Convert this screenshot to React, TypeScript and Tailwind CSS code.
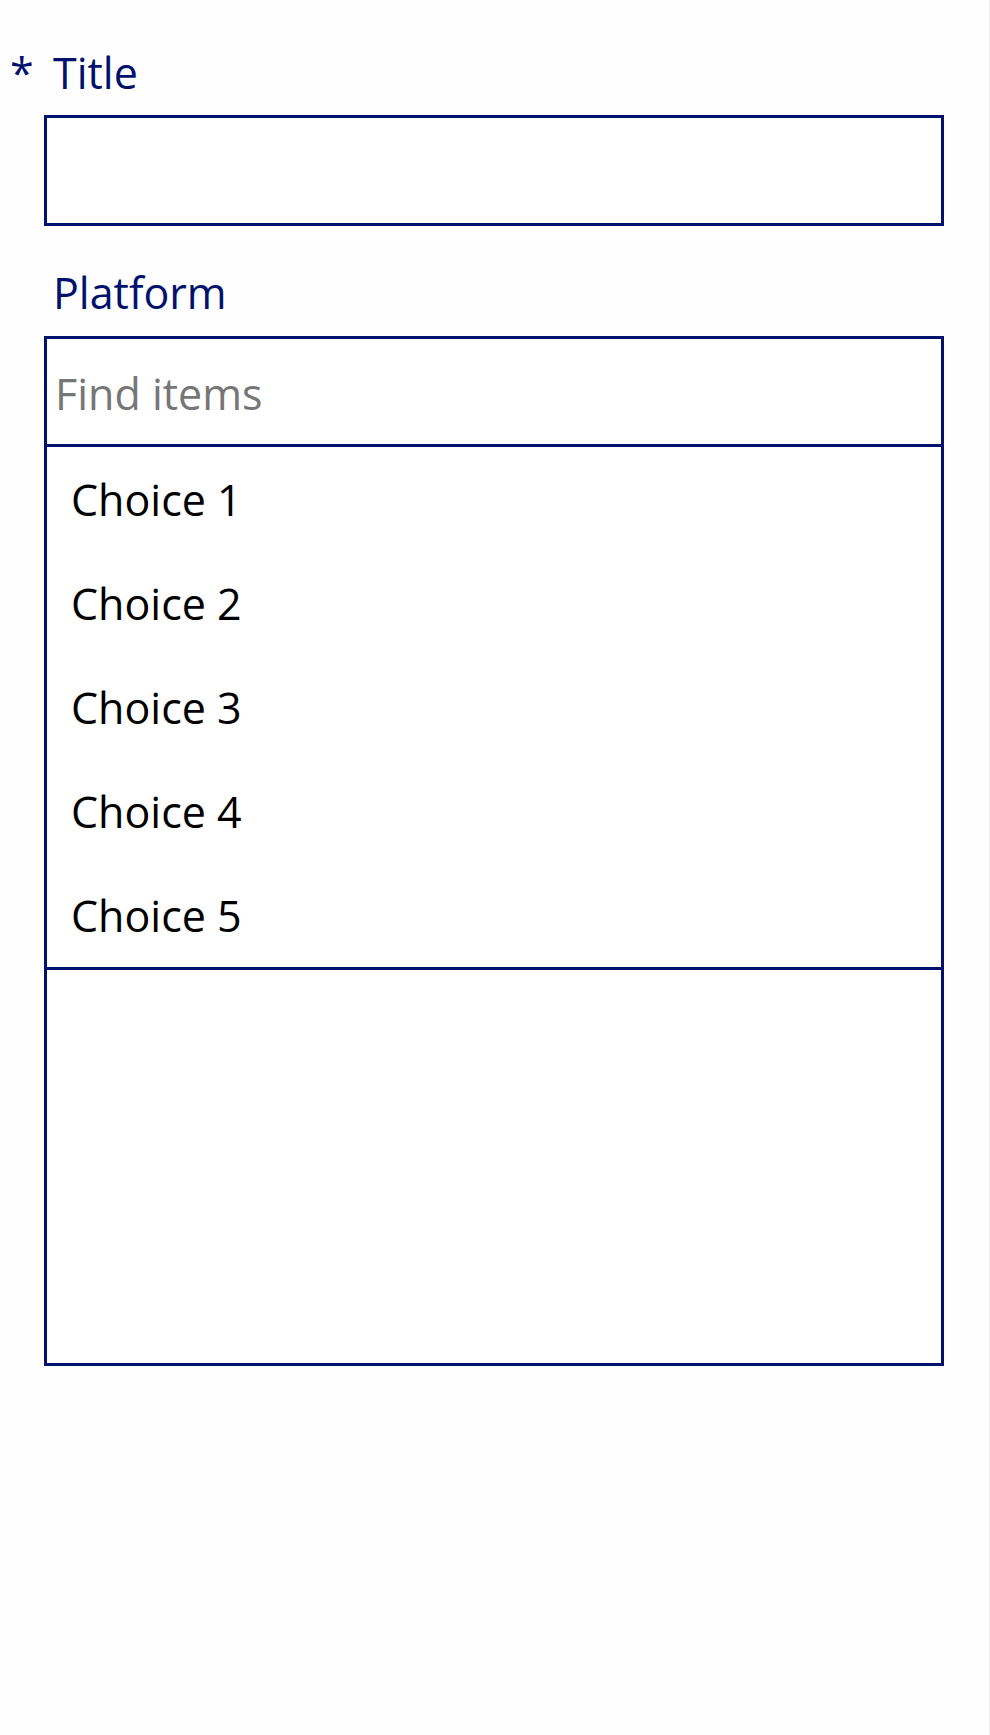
import React from "react";

const choices = ["Choice 1", "Choice 2", "Choice 3", "Choice 4", "Choice 5"];

export default function App() {
  return (
    <div
      className="w-[990px] h-[1735px] bg-[#fefefe] border-r border-[#ececec] text-[43px] leading-[58px]"
      style={{ fontFamily: "'Open Sans', 'Noto Sans', sans-serif" }}
    >
      <div className="pt-[44px]">
        <div className="flex items-start text-[#00126b]">
          <span className="w-[53px] pl-[10px] leading-[58px]">*</span>
          <span>Title</span>
        </div>
        <div className="ml-[44px] mt-[13px] w-[900px] h-[111px] border-[3px] border-[#00126b] bg-white" />
      </div>

      <div className="mt-[38px]">
        <div className="pl-[53px] text-[#00126b]">Platform</div>
        <div className="ml-[44px] mt-[14px] w-[900px] h-[1030px] border-[3px] border-[#00126b] bg-white flex flex-col">
          <div className="h-[108px] shrink-0 border-b-[3px] border-[#00126b] flex items-center pl-[8px] pt-[4px] text-[#767676]">
            Find items
          </div>
          <div className="border-b-[3px] border-[#00126b]">
            {choices.map((c) => (
              <div key={c} className="h-[104px] flex items-center pl-[24px] pt-[1px] text-black">
                {c}
              </div>
            ))}
          </div>
        </div>
      </div>
    </div>
  );
}
